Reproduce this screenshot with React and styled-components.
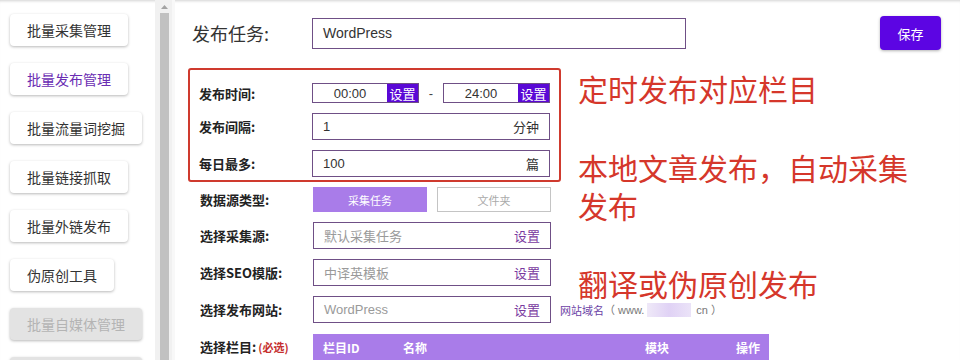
import React from "react";
import styled, { createGlobalStyle } from "styled-components";

const Global = createGlobalStyle`
  html, body { margin: 0; padding: 0; background: #fff; }
  body {
    width: 960px; height: 360px; overflow: hidden;
    font-family: "Liberation Sans", "Noto Sans CJK SC", sans-serif;
    color: #333;
  }
  * { box-sizing: border-box; }
`;

const Page = styled.div`
  display: flex;
  width: 960px;
  height: 360px;
  overflow: hidden;
  position: relative;
  box-shadow: inset 0 3px 3px -2px rgba(0, 0, 0, 0.18);
`;

const Sidebar = styled.nav`
  width: 155px;
  flex: none;
  display: flex;
  flex-direction: column;
  align-items: flex-start;
  gap: 17px;
  padding: 14px 0 0 10px;
`;

const NavButton = styled.div`
  height: 32px;
  flex: none;
  min-width: ${(p) => p.$minWidth || 0}px;
  padding: 0 17px;
  display: flex;
  align-items: center;
  border-radius: 4px;
  font-family: "Noto Sans CJK SC", sans-serif;
  font-size: 14px;
  white-space: nowrap;
  background: ${(p) => (p.$disabled ? "#e3e3e3" : "#fff")};
  color: ${(p) => (p.$disabled ? "#b4b4b4" : p.$active ? "#6a2db3" : "#333")};
  box-shadow: 0 1px 3px rgba(0, 0, 0, 0.28);
`;

const Scroll = styled.div`
  width: 20px;
  flex: none;
  display: flex;
  flex-direction: column;
  background: #f1f1f1;
  padding: 0 3px 0 5px;
  border-right: 3px solid #f8f8f8;
`;

const ScrollArrow = styled.div`
  height: 13px;
  display: flex;
  align-items: center;
  justify-content: center;
  flex: none;
`;

const ScrollThumb = styled.div`
  flex: 1;
  background: #c1c1c1;
`;

const Main = styled.main`
  flex: 1;
  position: relative;
  padding: 16px 19px 0 13px;
  display: flex;
  flex-direction: column;
`;

const Header = styled.div`
  display: flex;
  align-items: center;
  height: 34px;
`;

const TitleLabel = styled.div`
  width: 120px;
  margin-left: 4px;
  font-family: "Noto Sans CJK SC", sans-serif;
  font-size: 18px;
  color: #333;
`;

const TitleInput = styled.div`
  width: 374px;
  height: 31px;
  border: 1px solid #6f4f86;
  display: flex;
  align-items: center;
  padding-left: 10px;
  font-size: 14px;
  color: #333;
`;

const SaveButton = styled.div`
  margin-left: auto;
  width: 61px;
  height: 34px;
  border-radius: 4px;
  background: #5c05e3;
  color: #fff;
  font-family: "Noto Sans CJK SC", sans-serif;
  font-size: 13px;
  display: flex;
  align-items: center;
  justify-content: center;
  box-shadow: 0 1px 3px rgba(0, 0, 0, 0.3);
`;

const RedBox = styled.div`
  margin-top: 18px;
  width: 373px;
  border: 2px solid #cf3a2e;
  border-radius: 3px;
  padding: 13px 0 3px 9px;
  display: flex;
  flex-direction: column;
  gap: 10px;
`;

const Row = styled.div`
  display: flex;
  align-items: center;
  height: ${(p) => p.$h || 27}px;
  flex: none;
`;

const Label = styled.div`
  width: 113px;
  flex: none;
  font-family: "Noto Sans CJK SC", sans-serif;
  font-weight: 700;
  font-size: 13px;
  color: #222;
  white-space: nowrap;
`;

const Required = styled.span`
  color: #c62f2f;
  font-size: 11px;
  font-weight: 700;
  margin-left: 2px;
`;

const TimeField = styled.div`
  width: 107px;
  height: 20px;
  border: 1px solid #6f4f86;
  display: flex;
`;

const TimeValue = styled.div`
  flex: 1;
  display: flex;
  align-items: center;
  justify-content: center;
  font-size: 13px;
  color: #333;
`;

const TimeSet = styled.div`
  width: 31px;
  background: #5a08d6;
  color: #fff;
  font-family: "Noto Sans CJK SC", sans-serif;
  font-size: 13px;
  display: flex;
  align-items: center;
  justify-content: center;
`;

const Dash = styled.div`
  width: 24px;
  text-align: center;
  font-size: 13px;
  color: #444;
`;

const Field = styled.div`
  width: 238px;
  height: 27px;
  border: 1px solid #6f4f86;
  display: flex;
  align-items: center;
  justify-content: space-between;
  padding: 0 10px;
  font-family: "Liberation Sans", "Noto Sans CJK SC", sans-serif;
  font-size: 13px;
  color: ${(p) => (p.$placeholder ? "#9a9a9a" : "#333")};
`;

const Suffix = styled.span`
  color: ${(p) => (p.$link ? "#7a3a9f" : "#333")};
  font-family: "Noto Sans CJK SC", sans-serif;
`;

const Form = styled.div`
  margin-top: 5px;
  padding-left: 12px;
  display: flex;
  flex-direction: column;
  gap: 10px;
`;

const Toggle = styled.div`
  display: flex;
  gap: 10px;
`;

const ToggleButton = styled.div`
  width: 114px;
  height: 25px;
  display: flex;
  align-items: center;
  justify-content: center;
  font-family: "Noto Sans CJK SC", sans-serif;
  font-size: 11px;
  background: ${(p) => (p.$on ? "#a97ce9" : "#fff")};
  color: ${(p) => (p.$on ? "#fff" : "#aaa")};
  border: 1px solid ${(p) => (p.$on ? "#a97ce9" : "#c4c4c4")};
`;

const Domain = styled.div`
  margin-left: 9px;
  display: flex;
  align-items: center;
  font-family: "Liberation Sans", "Noto Sans CJK SC", sans-serif;
  font-size: 11px;
  line-height: 14px;
  color: #777;
  white-space: nowrap;
`;

const DomainLabel = styled.span`
  color: #6b3fa6;
  font-family: "Noto Sans CJK SC", sans-serif;
`;

const Blur = styled.span`
  display: inline-block;
  width: 44px;
  height: 14px;
  margin: 0 5px 0 3px;
  background: linear-gradient(90deg, #efe9f8, #e0d2f5 50%, #ebe3f8);
`;

const TableHead = styled.div`
  width: 456px;
  height: 27px;
  background: #a97ce9;
  display: grid;
  grid-template-columns: 80px 242px 91px auto;
  align-items: center;
  padding-left: 10px;
  color: #fff;
  font-family: "Noto Sans CJK SC", sans-serif;
  font-weight: 700;
  font-size: 12px;
  margin-top: 2px;
`;

const Callout = styled.div`
  position: absolute;
  left: 403px;
  top: ${(p) => p.$top}px;
  display: flex;
  flex-direction: column;
  font-family: "Noto Sans CJK SC", sans-serif;
  font-size: 30px;
  line-height: 38px;
  color: #d5372b;
  white-space: nowrap;
`;

const navItems = [
  { t: "批量采集管理" },
  { t: "批量发布管理", active: true },
  { t: "批量流量词挖掘" },
  { t: "批量链接抓取" },
  { t: "批量外链发布" },
  { t: "伪原创工具" },
  { t: "批量自媒体管理", disabled: true },
  { t: "", disabled: true, minWidth: 132 },
];

export default function App() {
  return (
    <>
      <Global />
      <Page>
        <Sidebar>
          {navItems.map((n, i) => (
            <NavButton
              key={i}
              $active={n.active}
              $disabled={n.disabled}
              $minWidth={n.minWidth}
            >
              {n.t}
            </NavButton>
          ))}
        </Sidebar>
        <Scroll>
          <ScrollArrow>
            <svg width="7" height="4" viewBox="0 0 7 4">
              <path d="M0 4 L3.5 0 L7 4 Z" fill="#a3a3a3" />
            </svg>
          </ScrollArrow>
          <ScrollThumb />
        </Scroll>
        <Main>
          <Header>
            <TitleLabel>发布任务:</TitleLabel>
            <TitleInput>WordPress</TitleInput>
            <SaveButton>保存</SaveButton>
          </Header>
          <RedBox>
            <Row $h={20}>
              <Label>发布时间:</Label>
              <TimeField>
                <TimeValue>00:00</TimeValue>
                <TimeSet>设置</TimeSet>
              </TimeField>
              <Dash>-</Dash>
              <TimeField>
                <TimeValue>24:00</TimeValue>
                <TimeSet>设置</TimeSet>
              </TimeField>
            </Row>
            <Row>
              <Label>发布间隔:</Label>
              <Field>
                <span>1</span>
                <Suffix>分钟</Suffix>
              </Field>
            </Row>
            <Row>
              <Label>每日最多:</Label>
              <Field>
                <span>100</span>
                <Suffix>篇</Suffix>
              </Field>
            </Row>
          </RedBox>
          <Form>
            <Row $h={25}>
              <Label>数据源类型:</Label>
              <Toggle>
                <ToggleButton $on>采集任务</ToggleButton>
                <ToggleButton>文件夹</ToggleButton>
              </Toggle>
            </Row>
            <Row>
              <Label>选择采集源:</Label>
              <Field $placeholder>
                <span>默认采集任务</span>
                <Suffix $link>设置</Suffix>
              </Field>
            </Row>
            <Row>
              <Label>选择SEO模版:</Label>
              <Field $placeholder>
                <span>中译英模板</span>
                <Suffix $link>设置</Suffix>
              </Field>
            </Row>
            <Row>
              <Label>选择发布网站:</Label>
              <Field $placeholder>
                <span>WordPress</span>
                <Suffix $link>设置</Suffix>
              </Field>
              <Domain>
                <DomainLabel>网站域名</DomainLabel>
                <span>（ www.</span>
                <Blur />
                <span>cn ）</span>
              </Domain>
            </Row>
            <Row>
              <Label>
                选择栏目:<Required>(必选)</Required>
              </Label>
              <TableHead>
                <span>栏目ID</span>
                <span>名称</span>
                <span>模块</span>
                <span>操作</span>
              </TableHead>
            </Row>
          </Form>
          <Callout $top={69}>定时发布对应栏目</Callout>
          <Callout $top={148}>
            <span>本地文章发布，自动采集</span>
            <span>发布</span>
          </Callout>
          <Callout $top={264}>翻译或伪原创发布</Callout>
        </Main>
      </Page>
    </>
  );
}
